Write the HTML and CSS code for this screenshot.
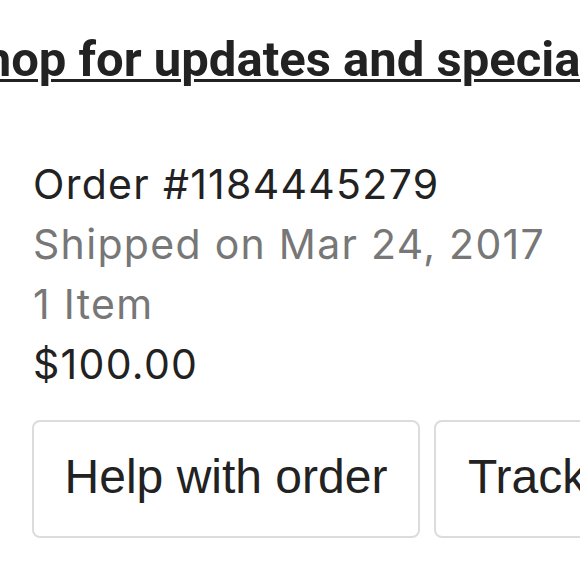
FILE: index.html
```html
<!DOCTYPE html>
<html>
<head>
<meta charset="utf-8">
<link rel="stylesheet" href="styles.css">
</head>
<body>
<div class="page">
  <div class="promo"><a class="promo-link" href="#">Favorite this shop for updates and specials</a></div>
  <div class="order">
    <div class="order-line order-id">Order #1184445279</div>
    <div class="order-line muted">Shipped on Mar 24, 2017</div>
    <div class="order-line muted">1 Item</div>
    <div class="order-line">$100.00</div>
  </div>
  <div class="actions">
    <div class="btn">Help with order</div>
    <div class="btn">Track package</div>
  </div>
</div>
</body>
</html>
```

FILE: styles.css
```css
html, body {
  margin: 0;
  padding: 0;
  background: #fff;
}
.page {
  width: 580px;
  height: 580px;
  overflow: hidden;
}
.promo {
  padding-top: 35px;
  height: 50px;
  white-space: nowrap;
  font-family: Roboto, "Noto Sans", sans-serif;
  font-weight: 700;
  font-size: 49px;
  line-height: 50px;
  margin-left: -326px;
}
.promo-link {
  color: #222;
  text-decoration: underline;
  text-decoration-thickness: 3px;
  text-underline-offset: 3px;
}
.order {
  margin-top: 69px;
  padding-left: 33px;
  font-family: Inter, "Noto Sans", sans-serif;
  font-size: 41px;
  letter-spacing: 1.3px;
  line-height: 60px;
  color: #222;
}
.muted {
  color: #777;
}
.actions {
  margin-top: 26px;
  margin-left: 32px;
  display: flex;
  gap: 14px;
}
.btn {
  flex-shrink: 0;
  box-sizing: border-box;
  width: 388px;
  height: 118px;
  border: 2px solid #dcdcdc;
  border-radius: 8px;
  display: flex;
  align-items: center;
  justify-content: center;
  padding-bottom: 5px;
  font-family: "Liberation Sans", Arial, sans-serif;
  font-size: 48px;
  color: #222;
  white-space: nowrap;
}
.btn + .btn {
  justify-content: flex-start;
  padding-left: 32px;
}
```
